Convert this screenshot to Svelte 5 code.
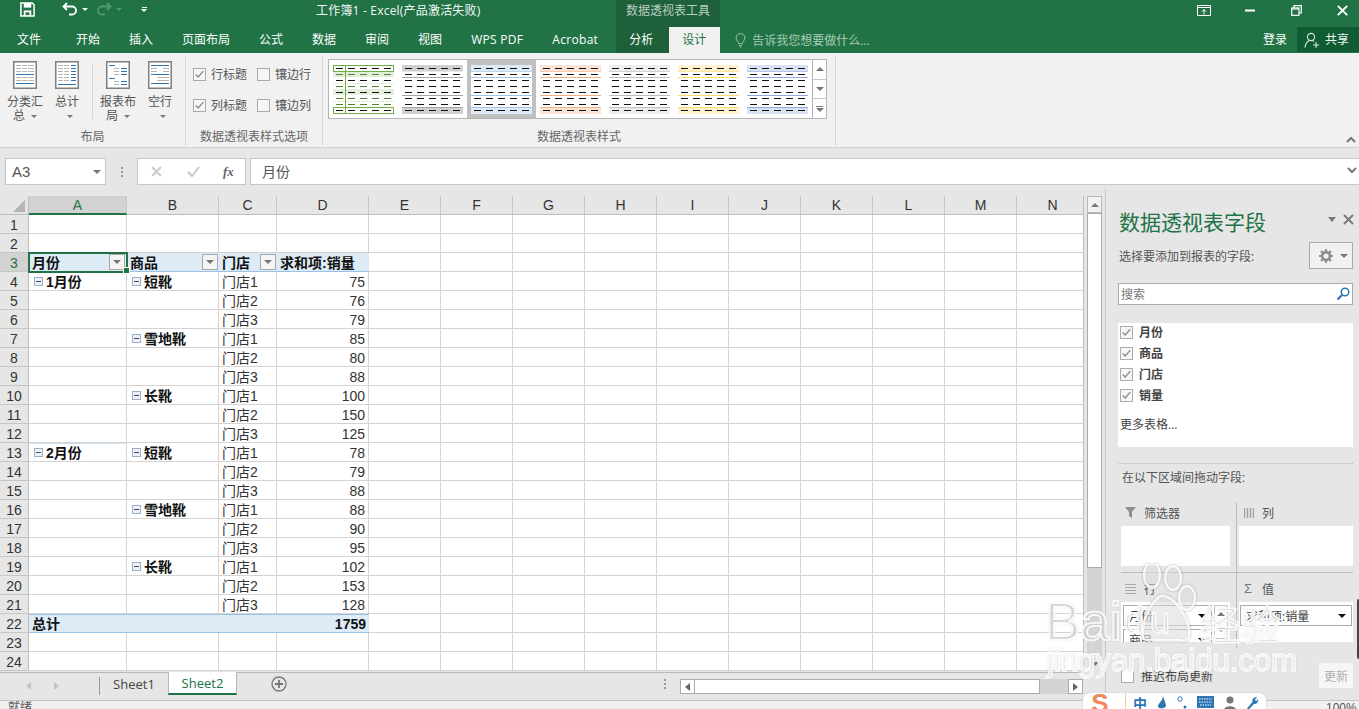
<script>
  const tabs = ['开始','插入','页面布局','公式','数据','审阅','视图'];
  const latinTabs = ['WPS PDF','Acrobat'];
  const colNames = ['A','B','C','D','E','F','G','H','I','J','K','L','M','N'];
  const extra = Array(10).fill(0);

  const sales = [75,76,79,85,80,88,100,150,125,78,79,88,88,90,95,102,153,128];
  const shoes = ['短靴','雪地靴','长靴'];
  const dataRows = sales.map((v, i) => ({
    month: i % 9 === 0 ? (i === 0 ? '1月份' : '2月份') : '',
    shoe: i % 3 === 0 ? shoes[(i / 3) % 3] : '',
    store: '门店' + (i % 3 + 1),
    value: v,
    num: i + 4
  }));

  const G = '#b4b4b4', B = '#2e75b6';
  const iconBars = [
    [[3,4,5,G],[9,4,5,G],[15,4,6,G],[3,7,5,G],[9,7,5,G],[15,7,6,G],[3,10,5,G],[9,10,5,G],[15,10,6,G],[3,13,18,B],[3,16,5,G],[9,16,5,G],[15,16,6,G],[3,19,5,G],[9,19,5,G],[15,19,6,G],[3,22,18,B]],
    [[3,4,5,G],[9,4,5,G],[16,4,5,B],[3,7,5,G],[9,7,5,G],[16,7,5,B],[3,10,5,G],[9,10,5,G],[16,10,5,B],[3,13,5,G],[9,13,5,G],[16,13,5,B],[3,16,5,G],[9,16,5,G],[16,16,5,B],[3,19,5,G],[9,19,5,G],[16,19,5,B],[3,23,18,B]],
    [[3,4,6,B],[8,7,5,G],[15,7,6,B],[8,10,5,G],[15,10,6,B],[8,13,5,G],[15,13,6,B],[3,17,6,B],[8,20,5,G],[15,20,6,B],[8,23,5,G],[15,23,6,B]],
    [[3,4,18,B],[3,7,6,G],[15,7,6,G],[3,10,6,G],[15,10,6,G],[3,13,18,B],[9,16,6,G],[15,16,6,G],[9,19,6,G],[15,19,6,G],[3,22,18,B]]
  ];
  const bigButtons = [
    { a: '分类汇', b: '总', icon: 0 },
    { a: '总计', b: '', icon: 1 },
    { a: '报表布', b: '局', icon: 2, sep: true },
    { a: '空行', b: '', icon: 3 }
  ];

  const thumbs = [
    { kind: 'green', band: '#e2efda', line: '#70ad47' },
    { band: '#d0d0d0', line: '#a5a5a5' },
    { band: '#deeaf6', line: '#9dc3e6', on: true },
    { band: '#fbe4d5', line: '#f4b183' },
    { band: '#ededed', line: '#bdbdbd' },
    { band: '#fff2cc', line: '#ffd966' },
    { band: '#d9e2f3', line: '#8eaadb' }
  ];
  const dashY = [3,9,15,21,27,33,39,45];
  const dashX = [3,15,27,39,51];
  const fields = ['月份','商品','门店','销量'];
</script>

{#snippet check(on)}
  <span class="cb">
    {#if on}
      <svg viewBox="0 0 13 13" width="11" height="11"><path d="M2 6.5 L5 9.5 L11 2.5" fill="none" stroke="#8a8a8a" stroke-width="1.6"/></svg>
    {/if}
  </span>
{/snippet}

{#snippet filterBtn()}
  <span class="fbtn"><i class="tri"></i></span>
{/snippet}

{#snippet minus()}
  <span class="minus"></span>
{/snippet}

<div class="app">
  <header class="title">
    <div class="qat">
      <svg class="save" viewBox="0 0 16 16" width="15" height="15"><path d="M1 1h12l2 2v12H1z" fill="none" stroke="#fff" stroke-width="1.6"/><rect x="4" y="1" width="8" height="5" fill="#fff"/><rect x="4" y="9" width="8" height="6" fill="#fff"/><rect x="6" y="11" width="4" height="3" fill="#217346"/></svg>
      <svg class="undo" viewBox="0 0 16 14" width="16" height="14"><path d="M5 1 L1.5 4.5 L5 8 M2 4.5 H10 A4 4 0 0 1 10 12.5 H7" fill="none" stroke="#fff" stroke-width="1.8"/></svg>
      <i class="dd white"></i>
      <svg class="redo" viewBox="0 0 16 14" width="16" height="14"><path d="M11 1 L14.5 4.5 L11 8 M14 4.5 H6 A4 4 0 0 0 6 12.5 H9" fill="none" stroke="#4f9a70" stroke-width="1.8"/></svg>
      <i class="dd dim"></i>
      <span class="custom"><b></b><i class="dd white"></i></span>
    </div>
    <div class="doc">工作簿1 - Excel(产品激活失败)</div>
    <div class="ctx">数据透视表工具</div>
    <div class="win">
      <svg viewBox="0 0 14 11" width="14" height="11"><path d="M.5.5h13v10H.5zM.5 2.5h13" fill="none" stroke="#fff"/><path d="M7 9.5V4.5M5 6.5l2-2 2 2" fill="none" stroke="#fff"/></svg>
      <svg viewBox="0 0 10 3" width="10" height="3"><rect width="10" height="2" y="0.5" fill="#fff"/></svg>
      <svg viewBox="0 0 11 11" width="11" height="11"><path d="M3 3V.7h7.3V8H8" fill="none" stroke="#fff" stroke-width="1.2"/><rect x=".7" y="3" width="7.3" height="7.3" fill="none" stroke="#fff" stroke-width="1.2"/><path d="M1 4h7" stroke="#fff"/></svg>
      <svg viewBox="0 0 11 11" width="11" height="11"><path d="M.8.8l9.4 9.4M10.2.8L.8 10.2" stroke="#fff" stroke-width="1.9"/></svg>
    </div>
  </header>

  <nav class="tabs">
    <span class="tab file">文件</span>
    {#each tabs as t}<span class="tab">{t}</span>{/each}
    {#each latinTabs as t}<span class="tab latin">{t}</span>{/each}
    <span class="tab analyse">分析</span>
    <span class="tab design">设计</span>
    <span class="tell">
      <svg viewBox="0 0 12 16" width="11" height="15"><path d="M4 11.5C4 9 1.2 8.200 1.200 5.200A4.800 4.800 0 0 1 10.800 5.200C10.800 8.200 8 9 8 11.500Z M4.500 13.500H7.500M5 15H7" fill="none" stroke="#a9cbb6" stroke-width="1"/></svg>
      告诉我您想要做什么...
    </span>
    <span class="login">登录</span>
    <span class="share">
      <svg viewBox="0 0 16 16" width="16" height="16"><circle cx="7" cy="5" r="3.600" fill="none" stroke="#dfe9e3" stroke-width="1.100"/><path d="M1 15.500C1.500 11.500 3.500 9.500 5 8.800M9 8.800L10 9.500M9 13H15M12 10V16" fill="none" stroke="#dfe9e3" stroke-width="1.100"/></svg>
      共享
    </span>
  </nav>

  <section class="ribbon">
    <div class="group g1">
      <div class="grow bigs">
        {#each bigButtons as b}
          {#if b.sep}<span class="vsep"></span>{/if}
          <div class="big">
            <svg viewBox="0 0 24 28" width="24" height="28">
              <rect x=".75" y=".75" width="22.500" height="26.500" fill="#fff" stroke="#7f7f7f" stroke-width="1.500"/>
              {#each iconBars[b.icon] as [x, y, w, c]}<rect {x} {y} width={w} height="1" fill={c}/>{/each}
            </svg>
            <span class="bl">{b.a}</span>
            <span class="bl">{b.b}<i class="dd grey"></i></span>
          </div>
        {/each}
      </div>
      <div class="glabel">布局</div>
    </div>
    <div class="group g2">
      <div class="grow opts">
        <label class="opt">{@render check(true)}行标题</label>
        <label class="opt">{@render check(false)}镶边行</label>
        <label class="opt">{@render check(true)}列标题</label>
        <label class="opt">{@render check(false)}镶边列</label>
      </div>
      <div class="glabel">数据透视表样式选项</div>
    </div>
    <div class="group g3">
      <div class="grow">
        <div class="gallery">
          <div class="thumbs">
            {#each thumbs as t}
              <div class="thumb" class:on={t.on}>
                <svg viewBox="0 0 61 49" width="61" height="49">
                  {#if t.kind === 'green'}
                    <rect y="6" width="61" height="6" fill="#e2efda"/>
                    <rect y="24" width="61" height="6" fill="#e2efda"/>
                    <rect y="18" width="61" height="1" fill="#e2efda"/>
                    <rect y="36" width="61" height="1" fill="#e2efda"/>
                    <rect x=".5" y=".5" width="60" height="6" fill="#fff" stroke="#70ad47"/>
                    <rect x=".5" y="42.500" width="60" height="6" fill="#fff" stroke="#70ad47"/>
                    <path d="M12.500 0V49" stroke="#70ad47"/>
                    {#each dashY as y, i}{#each dashX as x}
                      <rect {x} {y} width="7" height="1" fill={i === 0 || i === 7 || i === 2 || i === 4 ? '#111' : '#548235'}/>
                    {/each}{/each}
                  {:else}
                    <rect width="61" height="6.500" fill={t.band}/>
                    <rect y="42" width="61" height="7" fill={t.band}/>
                    <rect y="12" width="61" height="1" fill={t.line}/>
                    <rect y="30" width="61" height="1" fill={t.line}/>
                    <rect y="42" width="61" height="1" fill={t.line}/>
                    <rect y="6" width="61" height=".6" fill={t.line} opacity={t.line === '#a5a5a5' ? 0 : 1}/>
                    {#each dashY as y}{#each dashX as x}
                      <rect {x} {y} width="7" height="1" fill="#111"/>
                    {/each}{/each}
                  {/if}
                </svg>
              </div>
            {/each}
          </div>
          <div class="gscroll">
            <span><i class="up"></i></span>
            <span><i class="tri"></i></span>
            <span class="more"><b></b><i class="tri"></i></span>
          </div>
        </div>
      </div>
      <div class="glabel">数据透视表样式</div>
    </div>
    <svg class="collapse" viewBox="0 0 10 7" width="10" height="7"><path d="M1 6L5 2L9 6" fill="none" stroke="#777" stroke-width="2"/></svg>
  </section>

  <section class="formula">
    <div class="name"><span>A3</span><i class="tri"></i></div>
    <div class="dots"><i></i><i></i><i></i></div>
    <div class="fx">
      <svg viewBox="0 0 11 11" width="11" height="11"><path d="M1 1L10 10M10 1L1 10" stroke="#c8c8c8" stroke-width="1.800"/></svg>
      <svg viewBox="0 0 13 11" width="13" height="11"><path d="M1 6L5 10L12 1" fill="none" stroke="#c8c8c8" stroke-width="2"/></svg>
      <em>fx</em>
    </div>
    <div class="input">
      <span>月份</span>
      <svg viewBox="0 0 10 7" width="10" height="7"><path d="M1 1L5 5L9 1" fill="none" stroke="#777" stroke-width="2"/></svg>
    </div>
  </section>

  <div class="main">
    <div class="left">
      <div class="sheetwrap">
        <div class="sheet">
          <div class="row headrow">
            <div class="corner"><svg viewBox="0 0 12 12" width="12" height="12"><path d="M12 0V12H0Z" fill="#b5b5b5"/></svg></div>
            {#each colNames as c, i}<div class="ch" class:sel={i === 0}>{c}</div>{/each}
          </div>
          <div class="row"><div class="rh">1</div><div class="c"></div><div class="c"></div><div class="c"></div><div class="c"></div>{#each extra as _}<div class="c"></div>{/each}</div>
          <div class="row"><div class="rh">2</div><div class="c"></div><div class="c"></div><div class="c"></div><div class="c"></div>{#each extra as _}<div class="c"></div>{/each}</div>
          <div class="row">
            <div class="rh rsel">3</div>
            <div class="c hd active"><span>月份</span>{@render filterBtn()}<i class="handle"></i></div>
            <div class="c hd"><span>商品</span>{@render filterBtn()}</div>
            <div class="c hd"><span>门店</span>{@render filterBtn()}</div>
            <div class="c hd"><span>求和项:销量</span></div>
            {#each extra as _}<div class="c"></div>{/each}
          </div>
          {#each dataRows as r}
            <div class="row">
              <div class="rh">{r.num}</div>
              <div class="c lab" class:top={r.month}>{#if r.month}{@render minus()}{r.month}{/if}</div>
              <div class="c lab">{#if r.shoe}{@render minus()}{r.shoe}{/if}</div>
              <div class="c">{r.store}</div>
              <div class="c num">{r.value}</div>
              {#each extra as _}<div class="c"></div>{/each}
            </div>
          {/each}
          <div class="row">
            <div class="rh">22</div>
            <div class="c hd tot">总计</div><div class="c hd tot"></div><div class="c hd tot"></div><div class="c hd tot num">1759</div>
            {#each extra as _}<div class="c"></div>{/each}
          </div>
          <div class="row"><div class="rh">23</div><div class="c"></div><div class="c"></div><div class="c"></div><div class="c"></div>{#each extra as _}<div class="c"></div>{/each}</div>
          <div class="row"><div class="rh">24</div><div class="c"></div><div class="c"></div><div class="c"></div><div class="c"></div>{#each extra as _}<div class="c"></div>{/each}</div>
        </div>
        <div class="vscroll">
          <div class="vbtn"><i class="up"></i></div>
          <div class="vthumb"></div>
          <div class="vtrack"></div>
          <div class="vdown"><i class="tri"></i></div>
        </div>
      </div>
      <div class="sheetbar">
        <div class="nav"><i class="l"></i><i class="r"></i></div>
        <div class="s1">Sheet1</div>
        <div class="s2">Sheet2</div>
        <svg class="plus" viewBox="0 0 16 16" width="16" height="16"><circle cx="8" cy="8" r="7" fill="none" stroke="#777" stroke-width="1.300"/><path d="M8 4V12M4 8H12" stroke="#777" stroke-width="1.800"/></svg>
        <div class="dots barDots"><i></i><i></i><i></i></div>
        <div class="hscroll">
          <div class="hb"><i class="l"></i></div>
          <div class="hthumb"></div>
          <div class="htrack"></div>
          <div class="hb hr"><i class="r"></i></div>
        </div>
      </div>
    </div>

    <aside class="pane">
      <div class="ptitle"><h2>数据透视表字段</h2><i class="tri big-tri"></i>
        <svg viewBox="0 0 11 11" width="11" height="11"><path d="M1 1L10 10M10 1L1 10" stroke="#7a7a7a" stroke-width="2"/></svg>
      </div>
      <div class="prow">
        <span>选择要添加到报表的字段:</span>
        <div class="gear">
          <svg viewBox="0 0 16 16" width="14" height="14"><circle cx="8" cy="8" r="4.500" fill="none" stroke="#8f8f8f" stroke-width="3"/><path d="M8 0V3M8 13V16M0 8H3M13 8H16M2.300 2.300L4.500 4.500M11.500 11.500L13.700 13.700M13.700 2.300L11.500 4.500M4.500 11.500L2.300 13.700" stroke="#8f8f8f" stroke-width="2.400"/></svg>
          <i class="tri"></i>
        </div>
      </div>
      <div class="search">
        <span>搜索</span>
        <svg viewBox="0 0 14 14" width="14" height="14"><circle cx="9" cy="5" r="3.800" fill="none" stroke="#2e75b6" stroke-width="1.500"/><path d="M6 8L1.500 12.500" stroke="#2e75b6" stroke-width="2.200"/></svg>
      </div>
      <div class="flist">
        {#each fields as f}<div class="fitem">{@render check(true)}<b>{f}</b></div>{/each}
        <div class="moret">更多表格...</div>
      </div>
      <div class="dotted"></div>
      <div class="drag">在以下区域间拖动字段:</div>
      <div class="areas">
        <div class="ah">
          <svg viewBox="0 0 11 11" width="11" height="11"><path d="M0 0H11L7 5V11L4 9V5Z" fill="#8f8f8f"/></svg>
          <span>筛选器</span>
        </div>
        <div class="ah rh2">
          <svg viewBox="0 0 10 10" width="10" height="10"><path d="M.5 0V10M3.500 0V10M6.500 0V10M9.500 0V10" stroke="#a0a0a0" stroke-width="1.400"/></svg>
          <span>列</span>
        </div>
        <div class="abox lefta"></div>
        <div class="abox rb"></div>
        <div class="ah second">
          <svg viewBox="0 0 11 10" width="11" height="10"><path d="M0 .5H11M0 3.500H11M0 6.500H11M0 9.500H11" stroke="#a8a8a8"/></svg>
          <span>行</span>
        </div>
        <div class="ah second rh2">
          <span class="sigma">Σ</span>
          <span>值</span>
        </div>
        <div class="abox lefta rows">
          <div class="items">
            <div class="it">月份<i class="blk"></i></div>
            <div class="it">商品<i class="blk"></i></div>
          </div>
          <div class="itscroll"><i class="up"></i><i class="tri"></i></div>
        </div>
        <div class="abox rb vals">
          <div class="it">求和项:销量<i class="blk"></i></div>
        </div>
      </div>
      <div class="pfoot">
        <span class="cb wh"></span>
        <span class="defer">推迟布局更新</span>
        <span class="update">更新</span>
      </div>
      <i class="darkthumb"></i>
    </aside>
  </div>

  <footer class="status">
    <span>就绪</span>
    <span class="zoompct">100%</span>
  </footer>

  <div class="ime">
    <b class="slogo">S</b>
    <i class="imesep"></i>
    <span class="zh">中</span>
    <svg viewBox="0 0 10 14" width="10" height="14"><path d="M6 0C6 5 1 7 1 10.500C1 13 8 13 9 10C9 7 7 4 6 0Z" fill="#2e75b6"/></svg>
    <svg viewBox="0 0 10 14" width="10" height="14"><circle cx="3" cy="3" r="2.200" fill="none" stroke="#2e75b6"/><circle cx="8" cy="11" r="1.500" fill="#2e75b6"/></svg>
    <svg viewBox="0 0 17 12" width="17" height="12"><rect width="17" height="12" fill="#2e75b6"/><path d="M2 3H15M2 6H15M3 9H14" stroke="#fff" stroke-dasharray="1.500 1"/></svg>
    <svg viewBox="0 0 12 14" width="12" height="14"><circle cx="6" cy="4" r="3.500" fill="#777"/><path d="M0 14C0 9 12 9 12 14Z" fill="#777"/></svg>
    <svg viewBox="0 0 14 14" width="13" height="14"><path d="M1 13L7 6A4 4 0 0 1 12 1L9.500 3.500L11 5L13 3A4 4 0 0 1 8.500 8L3 14Z" fill="#2e75b6"/></svg>
  </div>

  <div class="wm" aria-hidden="true">
    <svg class="paw" viewBox="0 0 80 80" width="80" height="80">
      <g fill="rgba(255,255,255,.45)" stroke="rgba(255,255,255,.85)" stroke-width="2.500">
        <ellipse cx="15" cy="11" rx="8" ry="13"/>
        <ellipse cx="36" cy="14" rx="8" ry="12"/>
        <ellipse cx="50" cy="34" rx="8" ry="12"/>
        <path d="M6 72C4 52 20 28 28 32C40 36 50 52 52 66C54 76 48 78 42 76L12 76C8 76 6 76 6 72Z"/>
      </g>
    </svg>
    <span class="w1">Bai</span>
    <span class="w2">du</span>
    <span class="w3">经验</span>
    <span class="w4">jingyan.baidu.com</span>
  </div>
</div>

<style>
  :global(body) { margin: 0; background: #e6e6e6; }
  .app {
    --ui: "Noto Sans CJK SC", "Noto Sans", sans-serif;
    position: relative; width: 1359px; height: 709px; overflow: hidden;
    display: flex; flex-direction: column; font: 12px "Open Sans", "Noto Sans CJK SC", sans-serif; color: #444;
    background: #e6e6e6;
  }
  i { display: block; font-style: normal; }
  .tri { width: 0; height: 0; border: 4px solid transparent; border-top: 4px solid #777; border-bottom: 0; }
  .up { width: 0; height: 0; border: 4px solid transparent; border-bottom: 4px solid #777; border-top: 0; }
  .dd { display: inline-block; width: 0; height: 0; border: 3px solid transparent; border-top: 3px solid #fff; border-bottom: 0; }
  .dd.dim { border-top-color: #4f9a70; }
  .dd.grey { border-top-color: #777; margin-left: 6px; vertical-align: middle; }

  /* title */
  .title { height: 27px; background: #217346; display: flex; align-items: flex-start; color: #fff; flex: none; }
  .qat { width: 316px; height: 27px; position: relative; display: flex; align-items: center; flex: none; padding-left: 20px; box-sizing: border-box; padding-bottom: 9px; }
  .undo { margin-left: 27px; }
  .qat .dd { margin-left: 4px; }
  .redo { margin-left: 8px; }
  .custom { margin-left: 19px; display: flex; flex-direction: column; gap: 1px; align-items: center; }
  .custom b { width: 5px; height: 1px; background: #fff; }
  .custom .dd { margin: 0; }
  .doc { width: 300px; flex: none; line-height: 21px; color: #f4f8f5; letter-spacing: .2px; }
  .ctx { width: 104px; height: 27px; flex: none; background: #1e6039; color: #b9cfc2; text-align: center; line-height: 21px; }
  .win { flex: 1; display: flex; align-items: center; height: 20px; position: relative; padding-left: 477px; gap: 0; }
  .win svg:nth-child(2) { margin-left: 34px; }
  .win svg:nth-child(3) { margin-left: 36px; }
  .win svg:nth-child(4) { margin-left: 35px; }

  /* tabs */
  .tabs { height: 26px; background: #217346; display: flex; align-items: stretch; color: #fff; line-height: 25px; flex: none; padding-left: 3px; position: relative; }
  .tab { padding: 0 14px; margin-right: 1px; white-space: nowrap; }
  .tab.file { margin-right: 7px; }
  .tab.latin { letter-spacing: .3px; }
  .tab.analyse { background: #1e6039; margin: 0 0 0 3px; padding: 0 13px; width: 27px; }
  .tab.design { background: #f1f1f1; color: #217346; margin: 0; padding: 0 13px; width: 25px; }
  .tell { margin-left: 15px; color: #a9cbb6; display: flex; align-items: center; gap: 6px; width: 135px; white-space: nowrap; }
  .login { margin-left: auto; margin-right: 10px; }
  .share { width: 62px; height: 25px; background: #0f5c32; display: flex; align-items: center; gap: 5px; padding-left: 7px; box-sizing: border-box; line-height: 22px; color: #eef4f0; }

  /* ribbon */
  .ribbon { height: 94px; background: #f1f1f1; border-bottom: 1px solid #d2d2d2; display: flex; flex: none; position: relative; }
  .group { display: flex; flex-direction: column; border-right: 1px solid #d8d8d8; height: 90px; margin-top: 3px; box-sizing: border-box; }
  .g1 { width: 186px; }
  .g2 { width: 137px; }
  .g3 { width: 513px; }
  .grow { height: 71px; flex: none; box-sizing: border-box; }
  .glabel { height: 19px; text-align: center; color: #666; line-height: 20px; white-space: nowrap; }
  .bigs { display: flex; padding-left: 4px; align-items: flex-start; }
  .big { width: 42px; display: flex; flex-direction: column; align-items: center; padding-top: 5px; color: #555; }
  .big svg { margin-bottom: 6px; }
  .bl { height: 14px; line-height: 14px; margin-top: 0; white-space: nowrap; display: block; }
  .vsep { width: 1px; height: 56px; background: #d8d8d8; margin: 7px 4px 0 4px; flex: none; }
  .opts { display: grid; grid-template-columns: 64px 64px; padding: 12px 0 0 7px; grid-auto-rows: 31px; color: #555; }
  .opt { display: flex; align-items: flex-start; gap: 5px; line-height: 14px; white-space: nowrap; }
  .cb { width: 13px; height: 13px; box-sizing: border-box; border: 1px solid #ababab; display: flex; align-items: center; justify-content: center; background: #f6f6f6; flex: none; }
  .gallery { margin: 3px 0 0 5px; display: flex; width: 499px; height: 60px; border: 1px solid #b4b4b4; box-sizing: border-box; background: #fff; }
  .thumbs { display: flex; flex: 1; padding-left: 0; }
  .thumb { width: 69px; height: 58px; display: flex; align-items: center; justify-content: center; flex: none; box-sizing: border-box; }
  .thumb svg { display: block; margin-top: 0; }
  .thumb.on { background: #c0c0c0; }
  .thumb.on svg { background: #fff; }
  .gscroll { width: 14px; border-left: 1px solid #b4b4b4; display: flex; flex-direction: column; }
  .gscroll span { flex: 1; display: flex; flex-direction: column; align-items: center; justify-content: center; gap: 1px; border-bottom: 1px solid #c8c8c8; }
  .gscroll span:last-child { border: 0; }
  .gscroll .more b { width: 7px; height: 1px; background: #777; }
  .collapse { position: absolute; right: 3px; top: 83px; }

  /* formula */
  .formula { height: 41px; display: flex; padding: 10px 0 4px 5px; box-sizing: border-box; flex: none; background: #e6e6e6; }
  .name { width: 101px; background: #fff; border: 1px solid #c6c6c6; box-sizing: border-box; display: flex; align-items: center; justify-content: space-between; padding: 0 4px 0 6px; font: 15px "Liberation Sans", sans-serif; color: #555; }
  .dots { display: flex; flex-direction: column; gap: 2px; justify-content: center; }
  .dots i { width: 2px; height: 2px; background: #9a9a9a; }
  .formula .dots { width: 31px; align-items: center; }
  .fx { width: 109px; background: #fff; border: 1px solid #c6c6c6; box-sizing: border-box; display: flex; align-items: center; padding-left: 13px; gap: 25px; }
  .fx em { font: italic bold 13px "Liberation Serif", serif; color: #666; margin-left: -2px; }
  .input { flex: 1; margin-left: 4px; background: #fff; border: 1px solid #c6c6c6; border-right: 0; box-sizing: border-box; display: flex; align-items: center; justify-content: space-between; padding: 0 2px 2px 11px; font: 14px var(--ui); color: #555; }

  /* main */
  .main { flex: 1; display: flex; min-height: 0; }
  .left { width: 1105px; flex: none; display: flex; flex-direction: column; padding-top: 7px; box-sizing: border-box; }
  .sheetwrap { height: 476px; display: flex; flex: none; overflow: hidden; }
  .sheet { width: 1084px; flex: none; overflow: hidden; border-right: 1px solid #bdbdbd; box-sizing: border-box; }
  .row { display: grid; grid-template-columns: 29px 98px 92px 58px 92px repeat(10, 72px); grid-template-rows: 19px; height: 19px; }
  .corner { background: #e6e6e6; border-right: 1px solid #bdbdbd; border-bottom: 1px solid #bdbdbd; box-sizing: border-box; display: flex; align-items: flex-end; justify-content: flex-end; padding: 0 3px 2px 0; }
  .ch { background: #e6e6e6; border-right: 1px solid #c6c6c6; border-bottom: 1px solid #bdbdbd; box-sizing: border-box; text-align: center; font: 14px/18px "Liberation Sans", sans-serif; color: #333; }
  .ch.sel { background: #d2d2d2; color: #217346; border-bottom: 2px solid #217346; }
  .rh { background: #e6e6e6; border-right: 1px solid #bdbdbd; border-bottom: 1px solid #c6c6c6; box-sizing: border-box; text-align: center; font: 14px/20px "Liberation Sans", sans-serif; color: #333; overflow: hidden; }
  .rh.rsel { background: #d2d2d2; color: #217346; }
  .c { background: #fff; border-right: 1px solid #d4d4d4; border-bottom: 1px solid #d4d4d4; box-sizing: border-box; font: 14px/18px "Liberation Sans", "Noto Sans CJK SC", sans-serif; color: #333; padding: 1px 0 0 3px; white-space: nowrap; position: relative; display: flex; align-items: center; min-width: 0; }
  .c.num { justify-content: flex-end; padding: 1px 3px 0 0; color: #333; }
  .c.hd { background: #ddebf7; border-right: 0; border-bottom: 1px solid #9bc2e6; font-weight: 700; color: #111; justify-content: space-between; padding-right: 1px; }
  .c.tot { border-top: 1px solid #9bc2e6; color: #111; padding-top: 0; }
  .c.hd.num { justify-content: flex-end; padding-right: 3px; }
  .c.lab { font-weight: 700; color: #111; }
  .c.lab.top { box-shadow: inset 0 1px 0 #cfe0ef; }
  .c.active { outline: 2px solid #217346; outline-offset: -1px; z-index: 2; padding-right: 2px; }
  .handle { position: absolute; right: -3px; bottom: -3px; width: 5px; height: 5px; background: #217346; border: 1px solid #fff; }
  .fbtn { width: 16px; height: 16px; border: 1px solid #a8a8a8; background: #f4f4f4; box-sizing: border-box; display: flex; align-items: center; justify-content: center; flex: none; margin-top: -1px; }
  .minus { width: 9px; height: 9px; border: 1px solid #9ab0c4; background: #eef2f6; box-sizing: border-box; margin: 0 3px 0 2px; position: relative; flex: none; }
  .minus::after { content: ""; position: absolute; left: 1px; right: 1px; top: 3px; height: 1px; background: #446; }
  .vscroll { margin-left: 3px; width: 15px; display: flex; flex-direction: column; background: #d4d4d4; }
  .vbtn { height: 17px; background: #f1f1f1; border: 1px solid #b8b8b8; box-sizing: border-box; display: flex; justify-content: center; align-items: center; }
  .vthumb { height: 355px; background: #fff; border: 1px solid #aaa; box-sizing: border-box; }
  .vtrack { flex: 1; }
  .vdown { height: 16px; display: flex; align-items: center; justify-content: center; background: #e6e6e6; }

  .sheetbar { height: 28px; flex: none; border-top: 1px solid #b8b8b8; display: flex; box-sizing: border-box; margin-right: 22px; position: relative; background: #e6e6e6; }
  .nav { width: 100px; margin-top: 4px; height: 18px; border-right: 1px solid #999; display: flex; align-items: center; gap: 23px; padding-left: 26px; box-sizing: border-box; flex: none; }
  .l { width: 0; height: 0; border: 4px solid transparent; border-right: 5px solid #c4c4c4; border-left: 0; }
  .r { width: 0; height: 0; border: 4px solid transparent; border-left: 5px solid #c4c4c4; border-right: 0; }
  .s1 { width: 68px; text-align: center; line-height: 22px; font-size: 13px; color: #444; flex: none; }
  .s2 { width: 69px; height: 23px; margin-top: -1px; background: #fff; border: solid #b8b8b8; border-width: 0 1px; border-bottom: 2px solid #217346; box-sizing: border-box; text-align: center; line-height: 22px; font-size: 13px; color: #217346; flex: none; }
  .plus { margin: 3px 0 0 34px; flex: none; }
  .barDots { margin: 6px 0 0 377px; height: 10px; flex: none; }
  .hscroll { margin: 6px 0 0 14px; height: 15px; flex: 1; display: flex; }
  .hb { width: 15px; background: #fff; border: 1px solid #ababab; box-sizing: border-box; display: flex; align-items: center; justify-content: center; flex: none; }
  .hb .l { border-right-color: #666; }
  .hb .r { border-left-color: #666; }
  .hthumb { width: 345px; background: #fff; border: 1px solid #ababab; border-left: 0; box-sizing: border-box; flex: none; }
  .htrack { flex: 1; background: #d4d4d4; }

  /* pane */
  .pane { flex: 1; border-left: 1px solid #c6c6c6; padding: 17px 7px 0 12px; box-sizing: border-box; position: relative; background: #e6e6e6; color: #555; }
  .ptitle { display: flex; align-items: center; height: 30px; padding-left: 1px; }
  .ptitle h2 { margin: 0; font: 400 21px/30px var(--ui); color: #217346; flex: 1; }
  .big-tri { border-width: 5px 4px 0 4px; margin: 0 7px 3px 0; }
  .ptitle svg { margin: 0 -1px 3px 0; }
  .prow { display: flex; justify-content: space-between; align-items: center; margin-top: 6px; height: 27px; padding-left: 1px; }
  .gear { width: 44px; height: 27px; box-sizing: border-box; border: 1px solid #ababab; background: #f1f1f1; display: flex; align-items: center; gap: 7px; padding-left: 9px; }
  .search { margin-top: 14px; height: 22px; background: #fff; border: 1px solid #ababab; box-sizing: border-box; display: flex; align-items: center; justify-content: space-between; padding: 0 2px 1px 2px; color: #777; }
  .flist { margin-top: 18px; height: 124px; background: #fff; padding: 1px 0 0 2px; box-sizing: border-box; }
  .fitem { display: flex; align-items: center; gap: 6px; height: 16px; margin-bottom: 5px; color: #444; }
  .fitem b { font-weight: 700; }
  .moret { margin-top: 14px; color: #444; line-height: 16px; }
  .dotted { margin-top: 16px; border-top: 1px dotted #bbb; }
  .drag { margin: 6px 0 0 4px; line-height: 16px; height: 16px; }
  .areas { margin: 16px 0 0 3px; display: grid; grid-template-columns: 115px 117px; width: 232px; position: relative; }
  .areas::after { content: ""; position: absolute; left: 115px; top: 0; bottom: -6px; width: 1px; background: #bdbdbd; }
  .ah { height: 24px; display: flex; align-items: center; gap: 8px; padding: 0 0 3px 4px; box-sizing: border-box; color: #555; font-size: 12px; }
  .ah.rh2 { padding-left: 8px; }
  .ah.second { height: 30px; margin-top: 6px; border-top: 1px solid #bdbdbd; padding-top: 2px; padding-bottom: 0; }
  .sigma { width: 10px; font: 13px "Liberation Sans", sans-serif; color: #777; }
  .abox { height: 40px; background: #fff; overflow: hidden; }
  .abox.lefta { margin-right: 6px; }
  .abox.rb { margin-left: 3px; width: 114px; }
  .rows { display: flex; padding: 3px 2px 0; box-sizing: border-box; gap: 2px; }
  .items { flex: 1; display: flex; flex-direction: column; gap: 3px; min-width: 0; }
  .it { height: 21px; flex: none; border: 1px solid #ababab; box-sizing: border-box; display: flex; align-items: center; justify-content: space-between; padding: 0 5px; color: #444; white-space: nowrap; }
  .blk { width: 0; height: 0; border: 4px solid transparent; border-top: 4px solid #111; border-bottom: 0; }
  .itscroll { width: 14px; border: 1px solid #c6c6c6; height: 34px; box-sizing: border-box; display: flex; flex-direction: column; align-items: center; justify-content: space-around; flex: none; }
  .vals { padding: 3px 1px; box-sizing: border-box; }
  .pfoot { margin: 21px 0 0 3px; display: flex; height: 25px; align-items: center; }
  .cb.wh { background: #fff; margin-top: 1px; }
  .defer { margin-left: 7px; color: #444; }
  .update { margin-left: auto; width: 34px; height: 25px; background: #f6f6f6; color: #b0b0b0; display: flex; align-items: center; justify-content: center; }
  .darkthumb { position: absolute; right: 0; top: 410px; width: 3px; height: 60px; background: #444; border-radius: 2px 0 0 2px; }

  .status { height: 9px; flex: none; background: #f1f1f1; border-top: 1px solid #c6c6c6; box-sizing: border-box; position: relative; overflow: hidden; color: #555; line-height: 12px; padding-left: 8px; }
  .zoompct { position: absolute; left: 1326px; top: 1px; font-family: "Liberation Sans", sans-serif; }

  .ime { position: absolute; left: 1083px; top: 693px; width: 183px; height: 20px; background: #fff; border-radius: 7px 7px 0 0; display: flex; align-items: flex-start; padding: 3px 0 0 5px; box-sizing: border-box; gap: 10px; box-shadow: 0 0 2px #ccc; }
  .slogo { width: 24px; height: 22px; color: #f08a5d; text-align: center; font: 900 26px/20px "Liberation Sans", sans-serif; margin-top: -3px; }
  .imesep { width: 1px; height: 16px; background: #f3c6b0; margin: -3px -3px 0 3px; }
  .zh { font: 700 14px/15px var(--ui); color: #2e75b6; }

  .wm { position: absolute; inset: 0; pointer-events: none; color: rgba(255,255,255,.55); z-index: 5; }
  .wm span { position: absolute; white-space: nowrap; -webkit-text-stroke: 2px rgba(255,255,255,.85); text-shadow: 0 0 2px rgba(90,90,90,.55); font-family: "Liberation Sans", sans-serif; }
  .paw { position: absolute; left: 1137px; top: 564px; filter: drop-shadow(0 0 1px rgba(90,90,90,.5)); }
  .w1 { left: 1045px; top: 595px; font-size: 53px; line-height: 53px; font-weight: 400; }
  .w2 { left: 1124px; top: 603px; font-size: 36px; line-height: 36px; letter-spacing: 6px; }
  .wm .w3 { left: 1200px; top: 598px; font-size: 40px; line-height: 50px; font-family: "Noto Sans CJK SC", sans-serif; }
  .w4 { left: 1047px; top: 641px; font-size: 31px; line-height: 40px; }
</style>
